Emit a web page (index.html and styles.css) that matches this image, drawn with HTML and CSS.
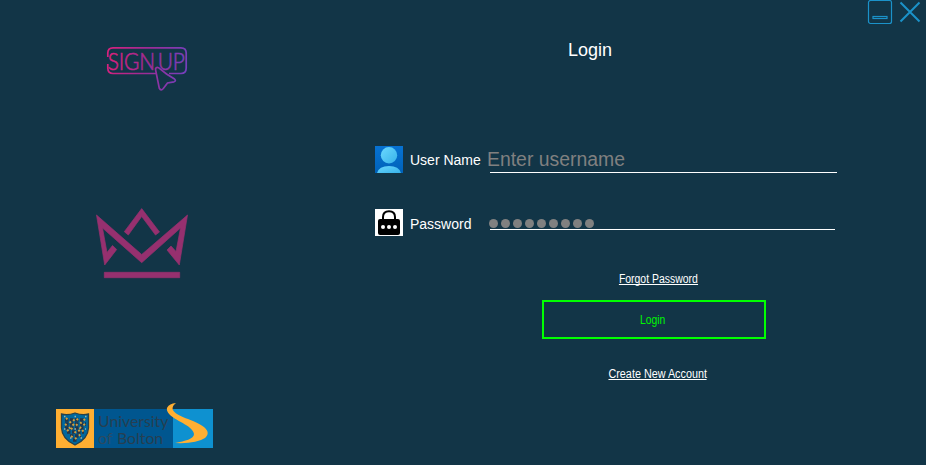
FILE: index.html
```html
<!DOCTYPE html>
<html lang="en">
<head>
<meta charset="utf-8">
<title>Login</title>
<link rel="stylesheet" href="styles.css">
</head>
<body>
<div class="window">
  <aside class="brand">
    <svg class="signup" width="82" height="46" viewBox="0 0 82 46">
      <defs><linearGradient id="neon" gradientUnits="userSpaceOnUse" x1="0" y1="0" x2="82" y2="15"><stop offset="0" stop-color="#dc207c"/><stop offset=".5" stop-color="#9d2b95"/><stop offset="1" stop-color="#7540bd"/></linearGradient></defs>
      <g fill="none" stroke="url(#neon)" stroke-width="1.7">
        <path d="M1.8 11V7Q1.8 1.8 7 1.8H75Q80.2 1.8 80.2 7V22Q80.2 27.5 75 27.5H63M50 27.5H7Q1.8 27.5 1.8 22V18"/>
        <path d="M49.6 22.5Q50.5 20.8 52.5 21.7L60.5 28L68.5 33Q70.5 35 68 35.8L61.5 37L57.3 42.5Q55 45.2 53.3 42.3L49.6 24Z"/>
      </g>
      <text class="signup-text" transform="translate(1.8 23.5) scale(.91 1)">SIGN<tspan dx="-3"> UP</tspan></text>
    </svg>
    <svg class="crown" width="94" height="72" viewBox="0 0 94 72" fill="#96306f" stroke="#96306f" stroke-width=".7">
      <path d="M1.5 8L46.7 47.5L92.5 8L84.3 58L72 43L76 39L81 44.5L85.5 21L46.7 55.7L7.5 21L12 45.5L17.5 38.5L21.7 42.5L9.7 58Z"/>
      <path d="M46.7 1.6L64.5 25L60.5 28L46.7 9.5L33.3 28L29.3 24.7Z"/>
      <path d="M9.3 65.3H84.7V70.7H9.3Z"/>
    </svg>
    <svg class="bolton" width="158" height="46" viewBox="0 0 158 46">
      <path fill="#ffaf32" d="M0 6H38V45H0Z"/>
      <path fill="#00568f" d="M38 6H117V45H38Z"/>
      <path fill="#0e91d0" d="M117 6H157V45H117Z"/>
      <path d="M5.5 11Q12 12.5 19 10Q26 12.5 32.5 11V25Q32 36 19 42Q6 36 5.5 25Z" fill="#00689d" stroke="#284149" stroke-width="1.3"/>
      <g fill="none" stroke-width="3.3">
        <path stroke="#263545" stroke-dasharray="3.5 1.5" d="M9 17L29 17M9 21H30M9 25H29M11 29H28M14 33H25M17 37H22"/>
        <path stroke="#d1a13f" stroke-width="1.9" stroke-dasharray="2 3" d="M10 15L15 20L20 15L25 20L29 16M9 21L14 25L19 20L24 25L30 20M11 28L15 25L20 30L25 26L28 29M15 33L19 36L25 31"/>
        <path stroke="#9eb4aa" stroke-width="1.4" stroke-dasharray="1.5 9" d="M8 13.5H31M8 26H30M14 35H26"/>
      </g>
      <g class="bolton-text"><text x="42" y="23.8">University</text><text class="of" x="42" y="41">of</text><text x="61" y="41">Bolton</text></g>
      <path fill="#ffaf32" d="M120 0C111 1 108 6 114 12C122 19 137 23 138 31C138 36 129 38 119 40Q140 41 149 35C156 29 149 23 137 18C124 13 110 8 120 0Z"/>
    </svg>
  </aside>
  <main class="panel">
    <nav class="controls">
      <svg width="26" height="25" viewBox="0 0 26 25" fill="none" stroke="#1b92c9"><rect x="1.5" y=".5" width="23" height="23" rx="2" stroke-width="1.2"/><rect x="6" y="16.5" width="14" height="2" stroke-width="1.2"/></svg>
      <svg width="22" height="25" viewBox="0 0 22 25"><path d="M1.5 2.5L20.5 21.5M20.5 2.5L1.5 21.5" stroke="#1b92c9" stroke-width="2"/></svg>
    </nav>
    <h1 class="title">Login</h1>
    <form class="form">
      <div class="row user-row">
        <svg width="28" height="27" viewBox="0 0 28 27"><defs><linearGradient id="bg" x1="0" y1="0" x2="0" y2="1"><stop stop-color="#0772d2"/><stop offset="1" stop-color="#0062b9"/></linearGradient><linearGradient id="person" x1="0" y1="0" x2="1" y2="1"><stop stop-color="#6bd8ff"/><stop offset="1" stop-color="#37b2e9"/></linearGradient></defs><path fill="url(#bg)" d="M0 0H28V27H0Z"/><circle cx="14" cy="9.3" r="8.2" fill="url(#person)"/><path fill="url(#person)" d="M2 27Q4 20 14 20Q24 20 26 27Z"/></svg>
        <span class="label">User Name</span>
        <div class="field"><span class="hint">Enter username</span></div>
      </div>
      <div class="row password-row">
        <svg width="28" height="27" viewBox="0 0 28 27"><path fill="#fff" d="M0 0H28V27H0Z"/><path d="M8 11V8Q8 2.2 14 2.2Q20 2.2 20 8V11" fill="none" stroke="#000" stroke-width="2"/><rect x="3" y="10" width="22" height="16" rx="2"/><g fill="#fff"><circle cx="8" cy="18" r="2"/><circle cx="14" cy="18" r="2"/><circle cx="20" cy="18" r="2"/></g></svg>
        <span class="label">Password</span>
        <div class="field"><span class="dots"><i></i><i></i><i></i><i></i><i></i><i></i><i></i><i></i><i></i></span></div>
      </div>
      <div class="actions">
        <a class="link forgot">Forgot Password</a>
        <button class="login" type="button"><span>Login</span></button>
        <a class="link create">Create New Account</a>
      </div>
    </form>
  </main>
</div>
</body>
</html>
```

FILE: styles.css
```css
* { box-sizing: border-box; }
body { margin: 0; background: #123547; color: #fff; font-family: "Liberation Sans", Arial, sans-serif; }
.window { display: flex; width: 926px; height: 465px; overflow: hidden; }
.brand { width: 375px; display: flex; flex-direction: column; align-items: flex-start; padding-top: 46px; }
.brand svg { flex-shrink: 0; }
.signup { margin-left: 106px; }
.signup-text { font-family: Lato, sans-serif; font-weight: 300; font-size: 23px; letter-spacing: -.2px; fill: url(#neon); stroke: url(#neon); stroke-width: .6px; }
.crown { margin: 115px 0 0 95px; }
.bolton { margin: 124px 0 0 56px; }
.bolton-text { font-family: Lato, sans-serif; font-size: 15.8px; fill: #263f51; }
.bolton-text .of { fill: #2c4a60; }
.panel { flex: 1; }
.controls { display: flex; justify-content: flex-end; gap: 6px; height: 25px; padding-right: 5px; }
.title { margin: 15px 0 0 193px; font-size: 18px; line-height: 20px; font-weight: 400; }
.form { margin-top: 86px; }
.row { display: flex; height: 27px; }
.password-row { margin-top: 36px; }
.label { width: 80px; margin-left: 7px; font-size: 14px; line-height: 28px; white-space: nowrap; }
.password-row .label { line-height: 30px; }
.field { width: 347px; height: 27px; border-bottom: 1px solid #fff; }
.password-row .field { width: 345px; height: 21px; }
.hint { display: block; margin-left: -3px; font-size: 19.4px; line-height: 26px; color: #808080; }
.dots { display: flex; gap: 3px; margin-left: -1px; padding-top: 10px; }
.dots i { width: 9px; height: 9px; border-radius: 50%; background: #808080; }
.actions { display: flex; flex-direction: column; align-items: center; width: 224px; margin: 36px 0 0 167px; font-size: 12px; }
.link { line-height: 15px; white-space: nowrap; border-bottom: 1px solid #fff; height: 13px; transform: scaleX(.87); }
.forgot { margin-left: 9px; }
.login { width: 224px; height: 39px; margin-top: 15px; padding: 0; border: 2px solid #00ff00; background: transparent; color: #00f600; font: inherit; }
.login span { display: block; padding-right: 3px; transform: scaleX(.86); }
.create { margin: 28px 0 0 7px; transform: scaleX(.9); }
```
